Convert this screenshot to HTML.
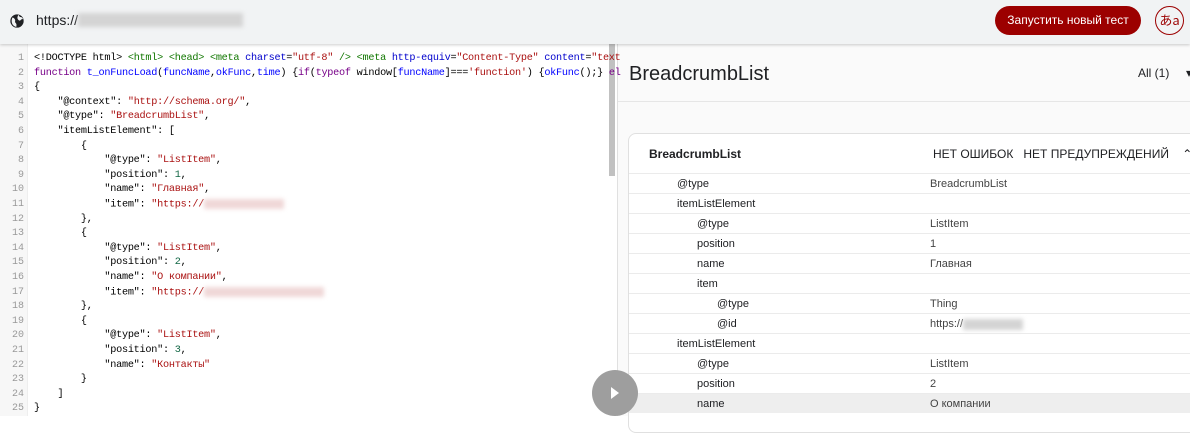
<!DOCTYPE html>
<html><head><meta charset="utf-8">
<style>
*{margin:0;padding:0;box-sizing:border-box}
body{width:1190px;height:416px;overflow:hidden;background:#fff;font-family:"Liberation Sans",sans-serif;position:relative}
.top{position:absolute;left:0;top:0;width:1190px;height:44px;background:#f1f3f4;box-shadow:0 1px 3px rgba(0,0,0,.2);z-index:5}
.url{position:absolute;left:36px;top:12px;font-size:14px;color:#202124}
.blur{display:inline-block;background:#d4d4d4;filter:blur(2px);vertical-align:middle}
.btn{position:absolute;left:995px;top:6px;width:146px;height:29px;border-radius:15px;background:#9c0000;color:#fff;font-size:12px;text-align:center;line-height:29px}
.lang{position:absolute;left:1155px;top:6px;width:29px;height:29px;border-radius:50%;border:1px solid #9c0000;color:#9c0000;font-size:13px;text-align:center;line-height:26px;font-family:"Noto Sans CJK JP",sans-serif}
.code{position:absolute;left:0;top:44px;width:617px;height:372px;background:#fff}
.gut{position:absolute;left:0;top:0;width:28px;height:372px;background:#f7f7f7;border-right:1px solid #eee}
.ln{position:absolute;left:0;width:24px;text-align:right;font:10px "Liberation Mono",monospace;color:#999}
.cl{position:absolute;left:34px;font:10.2px "Liberation Mono",monospace;letter-spacing:-0.25px;color:#000;white-space:pre}
.t{color:#170}.a{color:#00c}.s{color:#a11}.k{color:#708}.d{color:#00f}.n{color:#164}
.sb{position:absolute;left:609px;top:0;width:6px;height:132px;background:#c1c1c1}
.right{position:absolute;left:617px;top:44px;width:573px;height:372px;background:#fafafa;border-left:1px solid #e0e0e0}
.title{position:absolute;left:11px;top:19px;font-size:20px;color:#202124}
.all{position:absolute;left:520px;top:22px;font-size:12px;color:#202124;white-space:nowrap}
.hr{position:absolute;left:0;top:57px;width:573px;height:1px;background:#e6e6e6}
.card{position:absolute;left:10px;top:89px;width:580px;height:300px;background:#fff;border:1px solid #e0e0e0;border-radius:8px}
.ch{position:absolute;left:20px;top:13px;font-size:12px;font-weight:bold;color:#202124}
.cs{position:absolute;left:304px;top:13px;font-size:12px;color:#202124;white-space:nowrap}
.row{position:absolute;left:0;width:580px;height:20px;border-top:1px solid #ebebeb;font-size:11px;color:#202124}
.row .k1{position:absolute;top:4px}
.row .v{position:absolute;left:301px;top:4px;color:#444}
.play{position:absolute;left:592px;top:370px;width:46px;height:46px;border-radius:50%;background:#9e9e9e;z-index:4}
</style></head><body>
<div class="top">
<svg style="position:absolute;left:9px;top:13px" width="16" height="16" viewBox="0 0 24 24"><circle cx="12" cy="12" r="10" fill="#202124"/><path d="M5 7c2 0 3 1 4 3s-1 3 1 5 1 4 1 6c-4-1-7-4-7-9 0-2 .5-3 1-5zM14 3c2 1 1 3 3 3s3 1 4 3c-2 0-3 1-4 2s-3 0-4-2 0-4 1-6z" fill="#f1f3f4"/></svg>
<div class="url">https://<span class="blur" style="width:165px;height:14px;margin-top:-3px"></span></div>
<div class="btn">Запустить новый тест</div>
<div class="lang">あa</div>
</div>
<div class="code">
<div class="gut"></div>
<div class="sb"></div>
</div>
<div class="right">
<div class="title">BreadcrumbList</div>
<div class="all">All (1) &nbsp;&nbsp;&nbsp;&nbsp;▾</div>
<div class="hr"></div>
<div class="card">
<div class="ch">BreadcrumbList</div>
<div class="cs">НЕТ ОШИБОК &nbsp;&nbsp;НЕТ ПРЕДУПРЕЖДЕНИЙ &nbsp;&nbsp;&nbsp;⌃</div>
<div class="row" style="top:39px"><span class="k1" style="left:48px">@type</span><span class="v">BreadcrumbList</span></div>
<div class="row" style="top:59px"><span class="k1" style="left:48px">itemListElement</span></div>
<div class="row" style="top:79px"><span class="k1" style="left:68px">@type</span><span class="v">ListItem</span></div>
<div class="row" style="top:99px"><span class="k1" style="left:68px">position</span><span class="v">1</span></div>
<div class="row" style="top:119px"><span class="k1" style="left:68px">name</span><span class="v">Главная</span></div>
<div class="row" style="top:139px"><span class="k1" style="left:68px">item</span></div>
<div class="row" style="top:159px"><span class="k1" style="left:88px">@type</span><span class="v">Thing</span></div>
<div class="row" style="top:179px"><span class="k1" style="left:88px">@id</span><span class="v">https://<span class="blur" style="width:60px;height:11px"></span></span></div>
<div class="row" style="top:199px"><span class="k1" style="left:48px">itemListElement</span></div>
<div class="row" style="top:219px"><span class="k1" style="left:68px">@type</span><span class="v">ListItem</span></div>
<div class="row" style="top:239px"><span class="k1" style="left:68px">position</span><span class="v">2</span></div>
<div class="row" style="top:259px;background:#eee"><span class="k1" style="left:68px">name</span><span class="v">О компании</span></div>
</div>
</div>
<div class="play"><svg style="position:absolute;left:18px;top:17px" width="10" height="12" viewBox="0 0 10 12"><path d="M1 0l8 6-8 6z" fill="#fff"/></svg></div>

<div class="ln" style="top:53px">1</div><div class="cl" style="top:53px">&lt;!DOCTYPE html&gt; <span class="t">&lt;html&gt;</span> <span class="t">&lt;head&gt;</span> <span class="t">&lt;meta</span> <span class="a">charset</span>=<span class="s">"utf-8"</span> <span class="t">/&gt;</span> <span class="t">&lt;meta</span> <span class="a">http-equiv</span>=<span class="s">"Content-Type"</span> <span class="a">content</span>=<span class="s">"text</span></div>
<div class="ln" style="top:67.6px">2</div><div class="cl" style="top:67.6px"><span class="k">function</span> <span class="d">t_onFuncLoad</span>(<span class="d">funcName</span>,<span class="d">okFunc</span>,<span class="d">time</span>) {<span class="k">if</span>(<span class="k">typeof</span> window[<span class="d">funcName</span>]===<span class="s">'function'</span>) {<span class="d">okFunc</span>();} <span class="k">el</span></div>
<div class="ln" style="top:82.2px">3</div><div class="cl" style="top:82.2px">{</div>
<div class="ln" style="top:96.8px">4</div><div class="cl" style="top:96.8px">    "@context": <span class="s">"http://schema.org/"</span>,</div>
<div class="ln" style="top:111.4px">5</div><div class="cl" style="top:111.4px">    "@type": <span class="s">"BreadcrumbList"</span>,</div>
<div class="ln" style="top:126px">6</div><div class="cl" style="top:126px">    "itemListElement": [</div>
<div class="ln" style="top:140.6px">7</div><div class="cl" style="top:140.6px">        {</div>
<div class="ln" style="top:155.2px">8</div><div class="cl" style="top:155.2px">            "@type": <span class="s">"ListItem"</span>,</div>
<div class="ln" style="top:169.8px">9</div><div class="cl" style="top:169.8px">            "position": <span class="n">1</span>,</div>
<div class="ln" style="top:184.4px">10</div><div class="cl" style="top:184.4px">            "name": <span class="s">"Главная"</span>,</div>
<div class="ln" style="top:199px">11</div><div class="cl" style="top:199px">            "item": <span class="s">"https://</span><span class="blur" style="width:80px;height:10px;background:#f0d8d8"></span></div>
<div class="ln" style="top:213.6px">12</div><div class="cl" style="top:213.6px">        },</div>
<div class="ln" style="top:228.2px">13</div><div class="cl" style="top:228.2px">        {</div>
<div class="ln" style="top:242.8px">14</div><div class="cl" style="top:242.8px">            "@type": <span class="s">"ListItem"</span>,</div>
<div class="ln" style="top:257.4px">15</div><div class="cl" style="top:257.4px">            "position": <span class="n">2</span>,</div>
<div class="ln" style="top:272px">16</div><div class="cl" style="top:272px">            "name": <span class="s">"О компании"</span>,</div>
<div class="ln" style="top:286.6px">17</div><div class="cl" style="top:286.6px">            "item": <span class="s">"https://</span><span class="blur" style="width:120px;height:10px;background:#f0d8d8"></span></div>
<div class="ln" style="top:301.2px">18</div><div class="cl" style="top:301.2px">        },</div>
<div class="ln" style="top:315.8px">19</div><div class="cl" style="top:315.8px">        {</div>
<div class="ln" style="top:330.4px">20</div><div class="cl" style="top:330.4px">            "@type": <span class="s">"ListItem"</span>,</div>
<div class="ln" style="top:345px">21</div><div class="cl" style="top:345px">            "position": <span class="n">3</span>,</div>
<div class="ln" style="top:359.6px">22</div><div class="cl" style="top:359.6px">            "name": <span class="s">"Контакты"</span></div>
<div class="ln" style="top:374.2px">23</div><div class="cl" style="top:374.2px">        }</div>
<div class="ln" style="top:388.8px">24</div><div class="cl" style="top:388.8px">    ]</div>
<div class="ln" style="top:403.4px">25</div><div class="cl" style="top:403.4px">}</div>
</body></html>
